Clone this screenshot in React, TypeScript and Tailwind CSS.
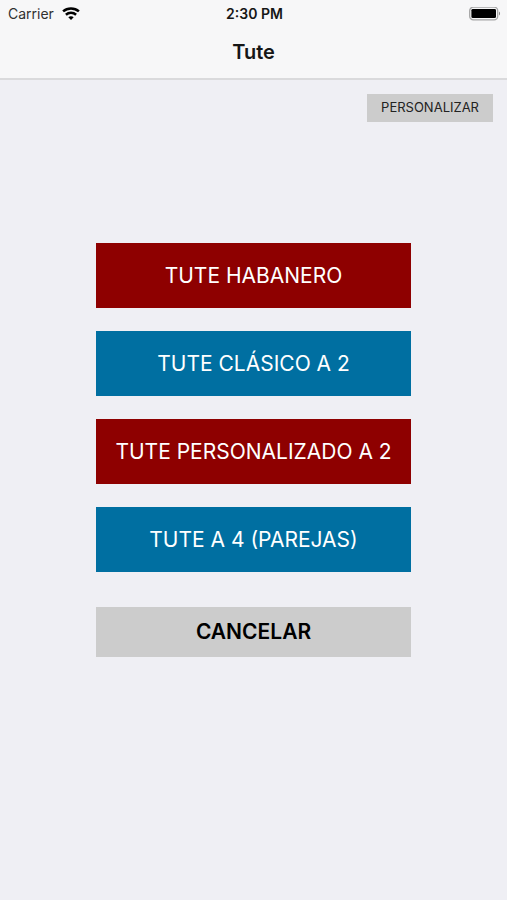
import React from "react";

type GameOption = { label: string; color: string };

const options: GameOption[] = [
  { label: "TUTE HABANERO", color: "bg-[#8e0000]" },
  { label: "TUTE CLÁSICO A 2", color: "bg-[#006fa1]" },
  { label: "TUTE PERSONALIZADO A 2", color: "bg-[#8e0000]" },
  { label: "TUTE A 4 (PAREJAS)", color: "bg-[#006fa1]" },
];

function WifiIcon() {
  return (
    <svg width="18" height="14" viewBox="0 0 18 14" aria-hidden="true">
      <g fill="none" stroke="#000" strokeWidth="2.5">
        <path d="M1.1 4.4C5.5 .4 12.5 .4 16.9 4.4" />
        <path d="M3.9 7.8C6.8 5.2 11.2 5.2 14.1 7.8" />
      </g>
      <path d="M6.3 10.2C7.8 8.9 10.2 8.9 11.7 10.2L9 13Z" />
    </svg>
  );
}

function BatteryIcon() {
  return (
    <svg width="32" height="14" viewBox="0 0 32 14" aria-hidden="true">
      <rect x="0.7" y="0.2" width="28" height="12.6" rx="3.6" fill="none" stroke="#a5a5a5" strokeWidth="1.3" />
      <rect x="2.4" y="1.9" width="24.6" height="9.2" rx="1.4" />
      <path d="M30 4.5C31.4 5.1 31.4 7.9 30 8.5Z" fill="#888" />
    </svg>
  );
}

export default function App() {
  return (
    <div className="min-h-screen bg-[#efeff4] font-['Inter','Liberation_Sans',sans-serif] text-black">
      <header className="border-b-2 border-[#dadadc] bg-[#f7f7f8] text-[#161616]">
        <div className="grid h-7 grid-cols-3 items-center pl-2 pr-1.5">
          <div className="flex items-center gap-2 text-sm text-[#303030]">
            <span>Carrier</span>
            <WifiIcon />
          </div>
          <time className="text-center text-sm font-semibold">2:30 PM</time>
          <div className="flex justify-end">
            <BatteryIcon />
          </div>
        </div>
        <h1 className="h-[50px] text-center text-xl leading-12 font-semibold">Tute</h1>
      </header>
      <main>
        <div className="flex justify-end px-3.5 pt-3.5">
          <button type="button" className="h-7 bg-[#cccccc] px-3.5 text-[13px] text-[#222222]">
            PERSONALIZAR
          </button>
        </div>
        <div className="mx-24 mt-[121px] flex flex-col gap-[23px]">
          {options.map((o) => (
            <button key={o.label} type="button" className={`h-[65px] text-[21px] whitespace-nowrap text-white ${o.color}`}>
              {o.label}
            </button>
          ))}
          <button type="button" className="mt-3 h-[50px] bg-[#cccccc] text-[21px] font-semibold">
            CANCELAR
          </button>
        </div>
      </main>
    </div>
  );
}
